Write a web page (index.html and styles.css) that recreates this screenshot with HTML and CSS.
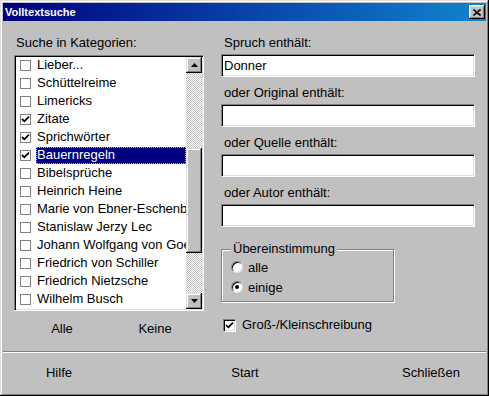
FILE: index.html
```html
<!DOCTYPE html>
<html lang="de">
<head>
    <meta charset="UTF-8">
    <link rel="stylesheet" href="styles.css">
    <title>Volltextsuche</title>
</head>
<body>
    <div class="window">
        <div class="titlebar">
            <span class="title">Volltextsuche</span>
            <span class="close-btn">
                <svg width="8" height="7" viewBox="0 0 8 7"><path d="M0.5 0.5 L7.5 6.5 M7.5 0.5 L0.5 6.5" stroke="#000" stroke-width="1.6"/></svg>
            </span>
        </div>

        <div class="content">
            <div class="left-col">
                <div class="label">Suche in Kategorien:</div>
                <div class="listbox">
                    <ul class="items">
                        <li><span class="cb"></span><span class="text">Lieber...</span></li>
                        <li><span class="cb"></span><span class="text">Schüttelreime</span></li>
                        <li><span class="cb"></span><span class="text">Limericks</span></li>
                        <li><span class="cb checked"><svg width="9" height="9" viewBox="0 0 9 9"><path d="M1 4 L3.3 6.3 L8 1.6" stroke="#000" stroke-width="1.8" fill="none"/></svg></span><span class="text">Zitate</span></li>
                        <li><span class="cb checked"><svg width="9" height="9" viewBox="0 0 9 9"><path d="M1 4 L3.3 6.3 L8 1.6" stroke="#000" stroke-width="1.8" fill="none"/></svg></span><span class="text">Sprichwörter</span></li>
                        <li class="selected"><span class="cb checked"><svg width="9" height="9" viewBox="0 0 9 9"><path d="M1 4 L3.3 6.3 L8 1.6" stroke="#000" stroke-width="1.8" fill="none"/></svg></span><span class="text">Bauernregeln</span></li>
                        <li><span class="cb"></span><span class="text">Bibelsprüche</span></li>
                        <li><span class="cb"></span><span class="text">Heinrich Heine</span></li>
                        <li><span class="cb"></span><span class="text">Marie von Ebner-Eschenb</span></li>
                        <li><span class="cb"></span><span class="text">Stanislaw Jerzy Lec</span></li>
                        <li><span class="cb"></span><span class="text">Johann Wolfgang von Goe</span></li>
                        <li><span class="cb"></span><span class="text">Friedrich von Schiller</span></li>
                        <li><span class="cb"></span><span class="text">Friedrich Nietzsche</span></li>
                        <li><span class="cb"></span><span class="text">Wilhelm Busch</span></li>
                    </ul>
                    <div class="scrollbar">
                        <div class="sb-btn">
                            <svg width="7" height="4" viewBox="0 0 7 4"><path d="M3.5 0 L7 4 L0 4 Z" fill="#000"/></svg>
                        </div>
                        <div class="track"><div class="thumb"></div></div>
                        <div class="sb-btn">
                            <svg width="7" height="4" viewBox="0 0 7 4"><path d="M0 0 L7 0 L3.5 4 Z" fill="#000"/></svg>
                        </div>
                    </div>
                </div>
                <div class="list-buttons">
                    <span class="flat-btn">Alle</span>
                    <span class="flat-btn">Keine</span>
                </div>
            </div>

            <div class="right-col">
                <div class="label">Spruch enthält:</div>
                <input class="field" type="text" value="Donner">
                <div class="label">oder Original enthält:</div>
                <input class="field" type="text">
                <div class="label">oder Quelle enthält:</div>
                <input class="field" type="text">
                <div class="label">oder Autor enthält:</div>
                <input class="field" type="text">

                <fieldset class="group">
                    <legend>Übereinstimmung</legend>
                    <div class="radio-row"><span class="radio"></span>alle</div>
                    <div class="radio-row"><span class="radio on"></span>einige</div>
                </fieldset>

                <div class="check-row">
                    <span class="checkbox"><svg width="9" height="9" viewBox="0 0 9 9"><path d="M1 4 L3.3 6.3 L8 1.6" stroke="#000" stroke-width="1.8" fill="none"/></svg></span>
                    Groß-/Kleinschreibung
                </div>
            </div>
        </div>

        <div class="separator"></div>

        <div class="bottom-buttons">
            <span class="flat-btn">Hilfe</span>
            <span class="flat-btn">Start</span>
            <span class="flat-btn">Schließen</span>
        </div>
    </div>
</body>
</html>
```

FILE: styles.css
```css
*{
    box-sizing: border-box;
}

html, body{
    margin: 0;
}

body{
    font-family: "Liberation Sans", Arial, sans-serif;
    font-size: 13px;
    color: #000;
    background-color: #c0c0c0;
}

.window{
    width: 489px;
    height: 396px;
    padding: 3px;
    background-color: #c0c0c0;
    box-shadow: inset -1px -1px #000, inset 1px 1px #dfdfdf, inset -2px -2px #808080, inset 2px 2px #fff;
    display: flex;
    flex-direction: column;
}

.titlebar{
    height: 18px;
    display: flex;
    align-items: center;
    justify-content: space-between;
    padding: 0 1px 0 2px;
    background: linear-gradient(to right, #000080, #1084d0);
}

.title{
    color: #fff;
    font-weight: bold;
    font-size: 11px;
}

.close-btn{
    width: 16px;
    height: 14px;
    display: flex;
    align-items: center;
    justify-content: center;
    background-color: #c0c0c0;
    box-shadow: inset -1px -1px #000, inset 1px 1px #fff, inset -2px -2px #808080, inset 2px 2px #dfdfdf;
}

.content{
    height: 330px;
    display: flex;
    gap: 17px;
    padding: 14px 0 0 11px;
}

.left-col{
    width: 190px;
}

.right-col{
    width: 254px;
}

.label{
    line-height: 16px;
    padding-left: 2px;
    white-space: nowrap;
}

.right-col .label{
    padding-left: 3px;
    margin-top: 8px;
}

.right-col .label:first-child{
    margin-top: 0;
}

/* list with checkboxes */
.listbox{
    height: 256px;
    margin-top: 4px;
    display: flex;
    padding: 1px;
    background-color: #fff;
    border: 1px solid;
    border-color: #808080 #fff #fff #808080;
    box-shadow: inset 1px 1px #000, inset -1px -1px #dfdfdf;
}

.items{
    flex: 1;
    margin: 0;
    padding: 0;
    list-style: none;
    overflow: hidden;
}

.items li{
    height: 18px;
    display: flex;
    align-items: flex-start;
    white-space: nowrap;
    padding-left: 4px;
}

.cb{
    width: 11px;
    height: 11px;
    margin-top: 3px;
    margin-right: 5px;
    flex-shrink: 0;
    border: 1px solid #808080;
    background-color: #fff;
    display: flex;
    align-items: center;
    justify-content: center;
}

.text{
    flex: 1;
    line-height: 16px;
    padding-left: 1px;
}

.selected .text{
    height: 17px;
    color: #fff;
    background-color: #000080;
    outline: 1px dotted #c8c864;
    outline-offset: -1px;
}

.scrollbar{
    width: 16px;
    display: flex;
    flex-direction: column;
}

.sb-btn, .thumb{
    background-color: #c0c0c0;
    box-shadow: inset -1px -1px #000, inset 1px 1px #dfdfdf, inset -2px -2px #808080, inset 2px 2px #fff;
}

.sb-btn{
    height: 16px;
    display: flex;
    align-items: center;
    justify-content: center;
}

.track{
    flex: 1;
    padding-top: 75px;
    background: repeating-conic-gradient(#c0c0c0 0 25%, #fff 0 50%) 0 0 / 2px 2px;
}

.thumb{
    height: 105px;
}

.list-buttons{
    display: flex;
    gap: 23px;
    margin: 10px 0 0 13px;
}

.flat-btn{
    width: 70px;
    line-height: 16px;
    text-align: center;
}

/* text fields */
.field{
    display: block;
    width: 100%;
    height: 23px;
    margin: 3px 0 0;
    padding: 0 2px;
    font: inherit;
    color: #000;
    outline: none;
    background-color: #fff;
    border: 1px solid;
    border-color: #808080 #fff #fff #808080;
    box-shadow: inset 1px 1px #000, inset -1px -1px #dfdfdf;
}

.group{
    display: block;
    width: 173px;
    min-width: 173px;
    margin: 14px 0 0;
    padding: 0 0 4px 9px;
    border: 1px solid #808080;
    box-shadow: 1px 1px #fff, inset 1px 1px #fff;
}

.group legend{
    padding: 0 2px;
    line-height: 16px;
    background-color: #c0c0c0;
}

.radio-row{
    height: 20px;
    display: flex;
    align-items: center;
    gap: 5px;
}

.radio{
    width: 12px;
    height: 12px;
    border-radius: 50%;
    background-color: #fff;
    border: 1px solid;
    border-color: #808080 #dfdfdf #dfdfdf #808080;
    box-shadow: inset 1px 1px #000;
    display: flex;
    align-items: center;
    justify-content: center;
}

.radio.on::after{
    content: "";
    width: 4px;
    height: 4px;
    border-radius: 50%;
    background-color: #000;
}

.check-row{
    display: flex;
    align-items: center;
    gap: 6px;
    margin-top: 15px;
    padding-left: 2px;
    line-height: 16px;
}

.checkbox{
    width: 13px;
    height: 13px;
    display: flex;
    align-items: center;
    justify-content: center;
    background-color: #fff;
    border: 1px solid;
    border-color: #808080 #fff #fff #808080;
    box-shadow: inset 1px 1px #000, inset -1px -1px #dfdfdf;
}

.separator{
    height: 2px;
    border-top: 1px solid #808080;
    border-bottom: 1px solid #fff;
}

.bottom-buttons{
    flex: 1;
    display: flex;
    align-items: center;
    gap: 106px;
    padding-left: 16px;
}

.bottom-buttons .flat-btn{
    width: 80px;
}
```
